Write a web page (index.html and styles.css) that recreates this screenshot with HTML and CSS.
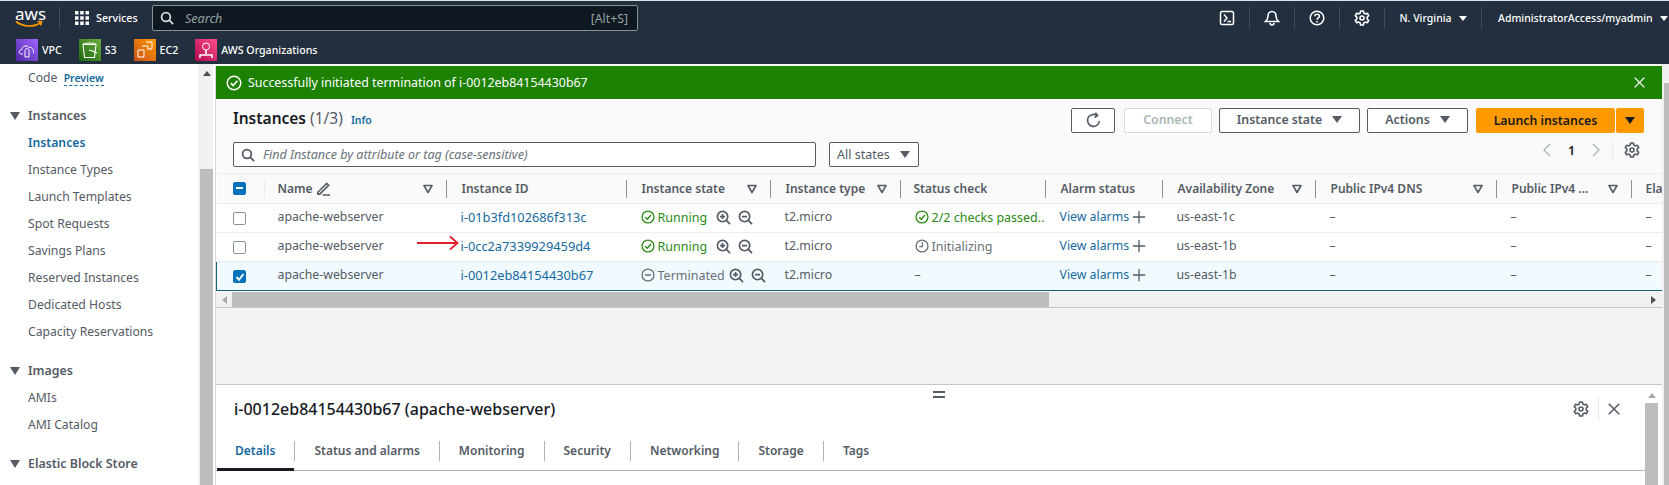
FILE: index.html
```html
<!DOCTYPE html>
<html lang="en">
<head>
    <meta charset="UTF-8">
    <meta name="viewport" content="width=device-width, initial-scale=1.0">
    <title>Instances | EC2 Management Console</title>
    <link rel="stylesheet" href="styles.css">
</head>
<body>
    <svg class="defs" width="0" height="0">
        <defs>
            <linearGradient id="g-vpc" x1="0" y1="1" x2="1" y2="0"><stop offset="0" stop-color="#4d27a8"/><stop offset="1" stop-color="#a166ff"/></linearGradient>
            <linearGradient id="g-s3" x1="0" y1="1" x2="1" y2="0"><stop offset="0" stop-color="#1b660f"/><stop offset="1" stop-color="#6cae3e"/></linearGradient>
            <linearGradient id="g-ec2" x1="0" y1="1" x2="1" y2="0"><stop offset="0" stop-color="#c8511b"/><stop offset="1" stop-color="#f90"/></linearGradient>
            <linearGradient id="g-org" x1="0" y1="1" x2="1" y2="0"><stop offset="0" stop-color="#b0084d"/><stop offset="1" stop-color="#ff4f8b"/></linearGradient>
        </defs>
        <symbol id="i-gear" viewBox="0 0 16 16">
            <path d="M6.6 1h2.8l.4 2 1.5.9 2-.7 1.4 2.5-1.5 1.4v1.8l1.5 1.4-1.4 2.5-2-.7-1.5.9-.4 2H6.600l-.4-2-1.500-.9-2 .7L1.300 10.300l1.500-1.400V7.100L1.300 5.700l1.400-2.500 2 .7 1.500-.9z" fill="none" stroke="currentColor" stroke-width="1.600" stroke-linejoin="round"/>
            <circle cx="8" cy="8" r="2" fill="none" stroke="currentColor" stroke-width="1.600"/>
        </symbol>
        <symbol id="i-search" viewBox="0 0 16 16">
            <circle cx="6.800" cy="6.800" r="5" fill="none" stroke="currentColor" stroke-width="2"/>
            <path d="M10.500 10.500 15 15" stroke="currentColor" stroke-width="2" fill="none"/>
        </symbol>
        <symbol id="i-zoom-in" viewBox="0 0 16 16">
            <circle cx="7" cy="7" r="5.500" fill="none" stroke="currentColor" stroke-width="1.800"/>
            <path d="M11 11l4 4M4.300 7h5.400M7 4.300v5.400" stroke="currentColor" stroke-width="1.800" fill="none"/>
        </symbol>
        <symbol id="i-zoom-out" viewBox="0 0 16 16">
            <circle cx="7" cy="7" r="5.500" fill="none" stroke="currentColor" stroke-width="1.800"/>
            <path d="M11 11l4 4M4.300 7h5.400" stroke="currentColor" stroke-width="1.800" fill="none"/>
        </symbol>
        <symbol id="i-ok" viewBox="0 0 16 16">
            <circle cx="8" cy="8" r="6.800" fill="none" stroke="currentColor" stroke-width="1.500"/>
            <path d="M4.800 8.200 7.200 10.600 11.400 5.800" stroke="currentColor" stroke-width="1.700" fill="none"/>
        </symbol>
        <symbol id="i-stop" viewBox="0 0 16 16">
            <circle cx="8" cy="8" r="6.800" fill="none" stroke="currentColor" stroke-width="1.500"/>
            <path d="M4.500 8h7" stroke="currentColor" stroke-width="1.700"/>
        </symbol>
        <symbol id="i-clock" viewBox="0 0 16 16">
            <circle cx="8" cy="8" r="6.800" fill="none" stroke="currentColor" stroke-width="1.500"/>
            <path d="M8.500 3.800V8.800H4.800" stroke="currentColor" stroke-width="1.500" fill="none"/>
        </symbol>
        <symbol id="i-plus" viewBox="0 0 16 16">
            <path d="M8 1v14M1 8h14" stroke="currentColor" stroke-width="1.500"/>
        </symbol>
        <symbol id="i-filter" viewBox="0 0 10 10">
            <path d="M1 1.500h8L5 8.500z" fill="none" stroke="currentColor" stroke-width="1.600" stroke-linejoin="round"/>
        </symbol>
        <symbol id="i-x" viewBox="0 0 16 16">
            <path d="M2 2l12 12M14 2 2 14" stroke="currentColor" stroke-width="1.700"/>
        </symbol>
    </svg>

    <header class="topbar">
        <div class="nav-row">
            <div class="logo">
                <span class="logo-text">aws</span>
                <svg class="logo-smile" viewBox="0 0 28 8" width="28" height="8"><path d="M1 1.500C8 7 19 7.500 26 2.500M22.500 1.500 26.500 1.800 25.500 5.500" fill="none" stroke="#f90" stroke-width="1.600"/></svg>
            </div>
            <button class="services">
                <svg viewBox="0 0 14 14" width="14" height="14" fill="#fff"><path d="M0 0h3.500v3.500H0zM5.200 0h3.500v3.500H5.200zM10.500 0H14v3.500h-3.500zM0 5.200h3.500v3.500H0zM5.200 5.200h3.500v3.500H5.200zM10.500 5.200H14v3.500h-3.500zM0 10.500h3.500V14H0zM5.200 10.500h3.500V14H5.200zM10.500 10.500H14V14h-3.500z"/></svg>
                Services
            </button>
            <div class="global-search">
                <svg class="icon-14" ><use href="#i-search"/></svg>
                <span class="global-search-text">Search</span>
                <span class="global-search-key">[Alt+S]</span>
            </div>
            <div class="nav-tools">
                <span class="tool">
                    <svg viewBox="0 0 16 16" width="16" height="16" fill="none" stroke="#fff" stroke-width="1.500"><rect x="1.500" y="1.500" width="13" height="13" rx="1.500"/><path d="M5 4.500 8 8 5 11.500M8.500 11.500H12"/></svg>
                </span>
                <span class="tool">
                    <svg viewBox="0 0 16 16" width="16" height="16" fill="none" stroke="#fff" stroke-width="1.600"><path d="M8 1.500c-2.500 0-4 2-4 4.500 0 2.500-1 4-2.500 5.500h13C13 10 12 8.500 12 6c0-2.500-1.500-4.500-4-4.500z"/><path d="M6 13c0 1.500 1 2 2 2s2-.5 2-2"/></svg>
                </span>
                <span class="tool">
                    <svg viewBox="0 0 16 16" width="16" height="16" fill="none" stroke="#fff" stroke-width="1.500"><circle cx="8" cy="8" r="6.800"/><path d="M5.800 6.200C5.800 3.500 10.400 3.600 10.400 6.200 10.400 7.900 8 7.900 8 9.800M8 11v1.500"/></svg>
                </span>
                <span class="tool">
                    <svg class="icon-16"><use href="#i-gear"/></svg>
                </span>
                <span class="tool tool-region">N. Virginia <i class="caret caret-sm"></i></span>
                <span class="tool tool-user">AdministratorAccess/myadmin <i class="caret caret-sm"></i></span>
            </div>
        </div>
        <div class="fav-row">
            <span class="fav">
                <svg class="fav-icon" viewBox="0 0 22 22"><rect width="22" height="22" fill="url(#g-vpc)"/><path d="M7 15H5.500C2.500 15 2.500 11 5.500 10.800 6 7 11 5.500 13 8.500 15.500 8 18 10 17.500 14M9 11.500c0-2.500 4-2.500 4 0v6.500H9z" fill="none" stroke="#fff" stroke-width="1"/></svg>
                VPC
            </span>
            <span class="fav">
                <svg class="fav-icon" viewBox="0 0 22 22"><rect width="22" height="22" fill="url(#g-s3)"/><path d="M4 5.500h13l-1.500 13h-10zM4 5.500c0-2 13-2 13 0M10 11c3 .5 6 2 8 3" fill="none" stroke="#fff" stroke-width="1.100"/></svg>
                S3
            </span>
            <span class="fav">
                <svg class="fav-icon" viewBox="0 0 22 22"><rect width="22" height="22" fill="url(#g-ec2)"/><path d="M4 11h6v7H4zM8 7h6v4M12 3h6v7h-4" fill="none" stroke="#fff" stroke-width="1"/></svg>
                EC2
            </span>
            <span class="fav">
                <svg class="fav-icon" viewBox="0 0 22 22"><rect width="22" height="22" fill="url(#g-org)"/><circle cx="11" cy="7.500" r="3.500" fill="none" stroke="#fff"/><path d="M11 11v4M5 19v-3h12v3" fill="none" stroke="#fff" stroke-width="1.600"/></svg>
                AWS Organizations
            </span>
        </div>
    </header>

    <div class="shell">
        <aside class="sidebar">
            <nav class="side-nav">
                <div class="side-item side-code">Code <span class="preview">Preview</span></div>
                <div class="side-head"><i class="caret"></i>Instances</div>
                <div class="side-item side-active">Instances</div>
                <div class="side-item">Instance Types</div>
                <div class="side-item">Launch Templates</div>
                <div class="side-item">Spot Requests</div>
                <div class="side-item">Savings Plans</div>
                <div class="side-item">Reserved Instances</div>
                <div class="side-item">Dedicated Hosts</div>
                <div class="side-item">Capacity Reservations</div>
                <div class="side-head"><i class="caret"></i>Images</div>
                <div class="side-item">AMIs</div>
                <div class="side-item">AMI Catalog</div>
                <div class="side-head"><i class="caret"></i>Elastic Block Store</div>
            </nav>
            <div class="side-scroll">
                <i class="arrow-up"></i>
                <div class="side-thumb"></div>
            </div>
        </aside>

        <main class="main">
            <div class="flash">
                <svg class="icon-16"><use href="#i-ok"/></svg>
                <span class="flash-text">Successfully initiated termination of i-0012eb84154430b67</span>
                <svg class="flash-close"><use href="#i-x"/></svg>
            </div>

            <section class="list-panel">
                <div class="list-head">
                    <h2 class="list-title">Instances <span class="count">(1/3)</span> <a class="info">Info</a></h2>
                    <div class="actions">
                        <button class="btn btn-icon">
                            <svg viewBox="0 0 16 16" width="17" height="17" fill="none" stroke="#545b64" stroke-width="1.500"><path d="M13.500 8.500A5.600 5.600 0 1 1 11 3.200M9.800 .8 11.800 3.400 9 5.200"/></svg>
                        </button>
                        <button class="btn btn-off">Connect</button>
                        <button class="btn btn-state">Instance state <i class="caret"></i></button>
                        <button class="btn btn-actions">Actions <i class="caret"></i></button>
                        <div class="launch">
                            <button class="btn btn-launch">Launch instances</button>
                            <button class="btn btn-launch-more"><i class="caret caret-dark"></i></button>
                        </div>
                    </div>
                </div>
                <div class="list-filter">
                    <div class="find">
                        <svg class="icon-14"><use href="#i-search"/></svg>
                        <span class="find-text">Find Instance by attribute or tag (case-sensitive)</span>
                    </div>
                    <div class="states">All states <i class="caret"></i></div>
                    <div class="pager">
                        <svg viewBox="0 0 10 16" width="10" height="16" fill="none" stroke="#aab7b8" stroke-width="1.400"><path d="M8 2 2 8l6 6"/></svg>
                        <span class="page-no">1</span>
                        <svg viewBox="0 0 10 16" width="10" height="16" fill="none" stroke="#aab7b8" stroke-width="1.400"><path d="M2 2l6 6-6 6"/></svg>
                        <span class="pager-gear"><svg class="icon-16"><use href="#i-gear"/></svg></span>
                    </div>
                </div>

                <div class="table-wrap">
                    <table class="grid">
                        <colgroup>
                            <col class="c-check"><col class="c-name"><col class="c-id"><col class="c-state"><col class="c-type">
                            <col class="c-status"><col class="c-alarm"><col class="c-zone"><col class="c-dns"><col class="c-ip"><col class="c-ela">
                        </colgroup>
                        <thead>
                            <tr>
                                <th><div class="th-in th-check"><span class="box box-mixed"></span></div></th>
                                <th><div class="th-in th-name"><span>Name <svg class="pencil" viewBox="0 0 16 16" width="15" height="15" fill="none" stroke="#545b64" stroke-width="1.700"><path d="M2 12 11.500 2.500l2 2L4 14H2zM7 15h8"/></svg></span><svg class="sort"><use href="#i-filter"/></svg></div></th>
                                <th><div class="th-in"><span>Instance ID</span></div></th>
                                <th><div class="th-in"><span>Instance state</span><svg class="sort"><use href="#i-filter"/></svg></div></th>
                                <th><div class="th-in"><span>Instance type</span><svg class="sort"><use href="#i-filter"/></svg></div></th>
                                <th><div class="th-in th-tight"><span>Status check</span></div></th>
                                <th><div class="th-in"><span>Alarm status</span></div></th>
                                <th><div class="th-in"><span>Availability Zone</span><svg class="sort"><use href="#i-filter"/></svg></div></th>
                                <th><div class="th-in"><span>Public IPv4 DNS</span><svg class="sort"><use href="#i-filter"/></svg></div></th>
                                <th><div class="th-in"><span>Public IPv4 ...</span><svg class="sort"><use href="#i-filter"/></svg></div></th>
                                <th><div class="th-in th-last"><span>Ela</span></div></th>
                            </tr>
                        </thead>
                        <tbody>
                            <tr>
                                <td class="cell-check"><span class="box"></span></td>
                                <td class="cell-name">apache-webserver</td>
                                <td><a class="link link-id">i-01b3fd102686f313c</a></td>
                                <td><span class="status ok"><svg class="icon-14"><use href="#i-ok"/></svg>Running</span><span class="zooms"><svg class="icon-15"><use href="#i-zoom-in"/></svg><svg class="icon-15"><use href="#i-zoom-out"/></svg></span></td>
                                <td>t2.micro</td>
                                <td><span class="status ok"><svg class="icon-14"><use href="#i-ok"/></svg>2/2 checks passed..</span></td>
                                <td><a class="link">View alarms</a><svg class="icon-plus"><use href="#i-plus"/></svg></td>
                                <td>us-east-1c</td>
                                <td>–</td><td>–</td><td>–</td>
                            </tr>
                            <tr>
                                <td class="cell-check"><span class="box"></span></td>
                                <td class="cell-name">apache-webserver</td>
                                <td class="cell-arrow">
                                    <svg class="red-arrow" viewBox="0 0 42 16" width="42" height="16" fill="none" stroke="#e0202f" stroke-width="1.800"><path d="M0 8h40M33 1.500 40.500 8 33 14.500"/></svg>
                                    <a class="link link-id">i-0cc2a7339929459d4</a>
                                </td>
                                <td><span class="status ok"><svg class="icon-14"><use href="#i-ok"/></svg>Running</span><span class="zooms"><svg class="icon-15"><use href="#i-zoom-in"/></svg><svg class="icon-15"><use href="#i-zoom-out"/></svg></span></td>
                                <td>t2.micro</td>
                                <td><span class="status grey"><svg class="icon-14"><use href="#i-clock"/></svg>Initializing</span></td>
                                <td><a class="link">View alarms</a><svg class="icon-plus"><use href="#i-plus"/></svg></td>
                                <td>us-east-1b</td>
                                <td>–</td><td>–</td><td>–</td>
                            </tr>
                            <tr class="row-selected">
                                <td class="cell-check"><span class="box box-on"><svg viewBox="0 0 12 12" width="12" height="12" fill="none" stroke="#fff" stroke-width="2"><path d="M2.500 6 5 8.800 9.500 3"/></svg></span></td>
                                <td class="cell-name">apache-webserver</td>
                                <td><a class="link link-id">i-0012eb84154430b67</a></td>
                                <td><span class="status grey"><svg class="icon-14"><use href="#i-stop"/></svg>Terminated</span><span class="zooms zooms-tight"><svg class="icon-15"><use href="#i-zoom-in"/></svg><svg class="icon-15"><use href="#i-zoom-out"/></svg></span></td>
                                <td>t2.micro</td>
                                <td>–</td>
                                <td><a class="link">View alarms</a><svg class="icon-plus"><use href="#i-plus"/></svg></td>
                                <td>us-east-1b</td>
                                <td>–</td><td>–</td><td>–</td>
                            </tr>
                        </tbody>
                    </table>
                </div>
                <div class="h-scroll">
                    <i class="arrow-left"></i>
                    <div class="h-thumb"></div>
                    <i class="arrow-right"></i>
                </div>
            </section>

            <div class="split-gap"></div>

            <section class="detail">
                <span class="handle"></span>
                <div class="detail-body">
                    <div class="detail-head">
                        <h3 class="detail-title">i-0012eb84154430b67 (apache-webserver)</h3>
                        <div class="detail-tools">
                            <span class="detail-gear"><svg class="icon-16"><use href="#i-gear"/></svg></span>
                            <svg class="icon-14"><use href="#i-x"/></svg>
                        </div>
                    </div>
                    <div class="tabs">
                        <a class="tab tab-active">Details</a>
                        <a class="tab">Status and alarms</a>
                        <a class="tab">Monitoring</a>
                        <a class="tab">Security</a>
                        <a class="tab">Networking</a>
                        <a class="tab">Storage</a>
                        <a class="tab tab-last">Tags</a>
                    </div>
                </div>
                <div class="detail-scroll">
                    <i class="arrow-up arrow-soft"></i>
                    <div class="detail-thumb"></div>
                </div>
            </section>
        </main>

        <div class="page-scroll"><div class="page-thumb"></div></div>
    </div>
</body>
</html>
```

FILE: styles.css
```css
* {
    box-sizing: border-box;
}
html, body {
    height: 100%;
}
body {
    margin: 0;
    height: 485px;
    overflow: hidden;
    display: flex;
    flex-direction: column;
    font-family: "Noto Sans", "Open Sans", sans-serif;
    font-size: 12.500px;
    color: #16191f;
    background: #fff;
}
.defs {
    position: absolute;
}
h2, h3 {
    margin: 0;
}
button {
    font-family: inherit;
}
.icon-14 {
    width: 14px;
    height: 14px;
    flex: none;
}
.icon-15 {
    width: 15px;
    height: 15px;
    flex: none;
}
.icon-16 {
    width: 16px;
    height: 16px;
    flex: none;
}
.caret {
    display: inline-block;
    width: 0;
    height: 0;
    border-left: 5px solid transparent;
    border-right: 5px solid transparent;
    border-top: 7px solid #545b64;
}
.caret-sm {
    border-left-width: 4px;
    border-right-width: 4px;
    border-top: 5px solid #fff;
    margin-left: 7px;
}
.caret-dark {
    border-top-color: #16191f;
}

/* top bar */
.topbar {
    height: 64px;
    flex: none;
    background: #232f3e;
    border-top: 1px solid #dfe3e6;
    color: #fff;
}
.nav-row {
    height: 34px;
    display: flex;
    align-items: center;
    padding-left: 15px;
}
.logo {
    width: 28px;
    height: 28px;
    position: relative;
    margin-right: 17px;
}
.logo-text {
    display: block;
    font-size: 17px;
    line-height: 19px;
}
.logo-smile {
    display: block;
    margin-top: -3px;
}
.logo::after {
    content: "";
    position: absolute;
    left: 44px;
    top: 3px;
    height: 22px;
    border-left: 1px solid #414d5c;
}
.services {
    display: flex;
    align-items: center;
    gap: 7px;
    background: none;
    border: 0;
    padding: 0 0 0 15px;
    width: 92px;
    color: #fff;
    font-size: 10.700px;
    font-weight: 500;
}
.global-search {
    width: 486px;
    height: 26px;
    display: flex;
    align-items: center;
    padding: 0 9px 0 7px;
    background: #0f1720;
    border: 1px solid #879596;
    border-radius: 2px;
    color: #d5dbdb;
}
.global-search-text {
    margin-left: 11px;
    flex: 1;
    font-style: italic;
    color: #95a5a6;
}
.global-search-key {
    color: #95a5a6;
    font-size: 12.300px;
}
.nav-tools {
    margin-left: auto;
    display: flex;
    align-items: center;
    height: 22px;
}
.tool {
    display: flex;
    align-items: center;
    justify-content: center;
    width: 45px;
    height: 22px;
    border-right: 1px solid #414d5c;
}
.tool-region {
    width: 97px;
    font-size: 10.500px;
    font-weight: 500;
}
.tool-user {
    width: 187px;
    border-right: 0;
    justify-content: flex-start;
    padding-left: 16px;
    font-size: 10.500px;
    font-weight: 500;
    white-space: nowrap;
}
.fav-row {
    height: 29px;
    display: flex;
    align-items: center;
    padding-left: 16px;
    gap: 17px;
    font-size: 10.600px;
    font-weight: 500;
}
.fav {
    display: flex;
    align-items: center;
    gap: 4px;
}
.fav-icon {
    width: 22px;
    height: 22px;
}

/* layout */
.shell {
    flex: 1;
    min-height: 0;
    display: flex;
}
.sidebar {
    width: 213px;
    flex: none;
    display: flex;
}
.side-nav {
    width: 198px;
    flex: none;
    overflow: hidden;
    font-size: 12.200px;
    color: #545b64;
}
.side-item, .side-head {
    height: 27px;
    line-height: 27px;
    padding-left: 28px;
    white-space: nowrap;
}
.side-code {
    height: 25.500px;
}
.side-head {
    position: relative;
    margin-top: 12px;
    font-size: 12.400px;
    font-weight: 600;
}
.side-head .caret {
    position: absolute;
    left: 10px;
    top: 10px;
    border-top-width: 8px;
}
.side-active {
    color: #16699e;
    font-weight: 600;
}
.preview {
    margin-left: 3px;
    font-size: 10.500px;
    font-weight: 600;
    color: #16699e;
    border-bottom: 1px dashed #16699e;
}
.side-scroll {
    flex: 1;
    display: flex;
    flex-direction: column;
    background: #f1f1f1;
    padding-left: 2px;
}
.side-thumb {
    margin-top: auto;
    height: 316px;
    background: #bdbdbd;
}
.arrow-up {
    display: block;
    width: 0;
    height: 0;
    margin: 7px auto 0;
    border-left: 4px solid transparent;
    border-right: 4px solid transparent;
    border-bottom: 5px solid #505050;
}
.arrow-soft {
    border-bottom-color: #a9a9a9;
}
.main {
    flex: 1;
    min-width: 0;
    margin: 2px 0 0 2px;
    display: flex;
    flex-direction: column;
    background: #f2f3f3;
    border-left: 1px solid #d5dbdb;
}
.page-scroll {
    width: 7px;
    flex: none;
    padding: 19px 0 0 2px;
    background: #f1f1f1;
}
.page-thumb {
    height: 100%;
    background: #bdbdbd;
}

/* flash banner */
.flash {
    height: 33px;
    flex: none;
    display: flex;
    align-items: center;
    gap: 6px;
    padding: 0 16px 0 10px;
    background: #1d8102;
    color: #fff;
}
.flash-text {
    flex: 1;
    font-size: 12.400px;
}
.flash-close {
    width: 13px;
    height: 13px;
}

/* instances list */
.list-panel {
    flex: none;
    height: 209px;
    background: #fafafa;
    border-bottom: 1px solid #c4c7c7;
}
.list-head {
    height: 34px;
    display: flex;
    justify-content: space-between;
    padding: 8px 18px 0 17px;
}
.list-title {
    font-size: 15.500px;
    font-weight: 600;
    line-height: 22px;
}
.count {
    font-weight: 400;
    color: #545b64;
}
.info {
    margin-left: 4px;
    font-size: 10.500px;
    font-weight: 600;
    color: #16699e;
}
.actions {
    display: flex;
    gap: 7px;
    padding-top: 1px;
}
.btn {
    height: 25px;
    padding: 0 0 2px;
    border: 1px solid #545b64;
    border-radius: 2px;
    background: #fff;
    color: #545b64;
    font-size: 12.300px;
    font-weight: 600;
    display: flex;
    align-items: center;
    justify-content: center;
    gap: 10px;
}
.btn-icon {
    width: 44px;
    margin-right: 2px;
    padding: 0;
}
.btn-off {
    width: 88px;
    border-color: #d5dbdb;
    color: #aab7b8;
}
.btn-state {
    width: 141px;
}
.btn-actions {
    width: 101px;
}
.launch {
    display: flex;
    gap: 1px;
    margin-left: 1px;
}
.btn-launch, .btn-launch-more {
    border-color: #f90;
    background: #f90;
    color: #16191f;
    padding: 0;
}
.btn-launch {
    width: 139px;
}
.btn-launch-more {
    width: 28px;
}
.list-filter {
    height: 25px;
    margin-top: 9px;
    display: flex;
    align-items: center;
    padding: 0 17px;
}
.find {
    width: 583px;
    height: 25px;
    display: flex;
    align-items: center;
    gap: 8px;
    padding: 0 7px;
    background: #fff;
    border: 1px solid #545b64;
    border-radius: 2px;
    color: #545b64;
}
.find-text {
    font-style: italic;
    color: #687078;
}
.states {
    width: 90px;
    height: 25px;
    margin-left: 13px;
    display: flex;
    align-items: center;
    justify-content: space-between;
    padding: 0 8px 0 7px;
    background: #fff;
    border: 1px solid #545b64;
    border-radius: 2px;
    color: #545b64;
}
.pager {
    margin-left: auto;
    display: flex;
    align-items: center;
    height: 22px;
    margin-right: 5px;
    margin-top: -9px;
    color: #545b64;
}
.page-no {
    width: 39px;
    text-align: center;
    color: #16191f;
    font-weight: 600;
}
.pager-gear {
    display: flex;
    align-items: center;
    margin-left: 11px;
    padding-left: 11px;
    height: 22px;
    border-left: 1px solid #eaeded;
}

/* table */
.table-wrap {
    margin-top: 6px;
    overflow: hidden;
    background: #fff;
}
.grid {
    width: 1447px;
    table-layout: fixed;
    border-collapse: collapse;
    background: #fff;
}
.c-check { width: 48px; }
.c-name { width: 182px; }
.c-id { width: 180px; }
.c-state { width: 144px; }
.c-type { width: 130px; }
.c-status { width: 145px; }
.c-alarm { width: 117px; }
.c-zone { width: 153px; }
.c-dns { width: 181px; }
.c-ip { width: 135px; }
.c-ela { width: 32px; }
.grid th {
    height: 30px;
    padding: 0;
    background: #fafafa;
    border-top: 1px solid #eaeded;
    border-bottom: 1px solid #eaeded;
    font-size: 12px;
    font-weight: 600;
    color: #545b64;
    text-align: left;
}
.th-in {
    height: 18px;
    display: flex;
    align-items: center;
    justify-content: space-between;
    padding: 0 13px 0 15px;
    border-right: 1px solid #879596;
    white-space: nowrap;
}
.th-check {
    padding-left: 16px;
    border-right-color: #eaeded;
}
.th-name, .th-tight {
    padding-left: 13px;
}
.th-last {
    border-right: 0;
    padding-left: 14px;
}
.pencil {
    vertical-align: -3px;
}
.sort {
    width: 10px;
    height: 10px;
    flex: none;
    color: #545b64;
}
.grid td {
    height: 29px;
    padding: 0 0 3px 14px;
    border-bottom: 1px solid #eaeded;
    white-space: nowrap;
    font-size: 12.300px;
    color: #545b64;
}
.grid td.cell-check {
    padding: 0 0 0 16px;
}
.grid td.cell-name {
    padding-left: 13px;
}
.grid td.cell-arrow {
    position: relative;
}
.red-arrow {
    position: absolute;
    left: -30px;
    top: 2px;
}
.box {
    display: block;
    width: 13px;
    height: 13px;
    background: #fff;
    border: 1px solid #879596;
    border-radius: 2px;
}
.box-on, .box-mixed {
    background: #0073bb;
    border-color: #0073bb;
}
.box-on svg {
    display: block;
}
.box-mixed {
    position: relative;
}
.box-mixed::after {
    content: "";
    position: absolute;
    left: 2px;
    right: 2px;
    top: 4px;
    height: 2px;
    background: #fff;
}
.row-selected td {
    height: 29px;
    background: #f1faff;
    border-top: 1px solid #16607a;
    border-bottom: 1px solid #16607a;
}
.row-selected td:first-child {
    border-left: 1px solid #16607a;
}
.link {
    color: #16699e;
}
.link-id {
    font-size: 12.800px;
}
.status {
    display: inline-flex;
    align-items: center;
    gap: 3px;
    vertical-align: middle;
    font-size: 12.500px;
}
.ok {
    color: #2b8a14;
}
.grey {
    color: #687078;
}
.zooms {
    display: inline-flex;
    gap: 7px;
    margin-left: 9px;
    vertical-align: middle;
    color: #545b64;
}
.zooms-tight {
    margin-left: 4px;
}
.icon-plus {
    width: 14px;
    height: 14px;
    margin-left: 3px;
    vertical-align: -3px;
    color: #545b64;
}
.h-scroll {
    height: 15px;
    margin-top: 1px;
    display: flex;
    align-items: center;
    background: #f1f1f1;
}
.h-thumb {
    width: 817px;
    height: 15px;
    margin-left: 5px;
    margin-right: auto;
    background: #bdbdbd;
}
.arrow-left {
    width: 0;
    height: 0;
    margin-left: 6px;
    border-top: 4px solid transparent;
    border-bottom: 4px solid transparent;
    border-right: 5px solid #a9a9a9;
}
.arrow-right {
    width: 0;
    height: 0;
    margin-right: 6px;
    border-top: 4px solid transparent;
    border-bottom: 4px solid transparent;
    border-left: 5px solid #505050;
}
.split-gap {
    height: 76px;
    flex: none;
}

/* details split panel */
.detail {
    flex: 1;
    position: relative;
    display: flex;
    background: #fff;
    border-top: 1px solid #c4c7c7;
}
.handle {
    position: absolute;
    left: 717px;
    top: 6px;
    width: 12px;
    height: 7px;
    border-top: 2px solid #545b64;
    border-bottom: 2px solid #545b64;
}
.detail-body {
    flex: 1;
    min-width: 0;
}
.detail-head {
    height: 47px;
    display: flex;
    align-items: center;
    justify-content: space-between;
    padding: 0 24px 0 18px;
}
.detail-title {
    font-size: 16px;
    font-weight: 500;
}
.detail-tools {
    display: flex;
    align-items: center;
    color: #545b64;
}
.detail-gear {
    display: flex;
    align-items: center;
    height: 24px;
    padding-right: 9px;
    border-right: 1px solid #eaeded;
    margin-right: 8px;
}
.tabs {
    height: 39px;
    display: flex;
    align-items: flex-start;
    padding-top: 9px;
    border-bottom: 1px solid #aab7b8;
    color: #545b64;
    font-size: 12px;
    font-weight: 600;
}
.tab {
    height: 20px;
    line-height: 20px;
    padding: 0 19px;
    border-right: 1px solid #aab7b8;
}
.tab-last {
    border-right: 0;
}
.tab-active {
    color: #16699e;
    position: relative;
}
.tab-active::after {
    content: "";
    position: absolute;
    left: 1px;
    right: 0;
    bottom: -10px;
    height: 3px;
    background: #16191f;
}
.detail-scroll {
    width: 15px;
    flex: none;
    margin-right: 2px;
    padding-right: 2px;
    background: #fff;
    display: flex;
    flex-direction: column;
}
.detail-scroll .arrow-up {
    margin-top: 8px;
}
.detail-thumb {
    flex: 1;
    margin-top: 5px;
    background: #bdbdbd;
}
```
